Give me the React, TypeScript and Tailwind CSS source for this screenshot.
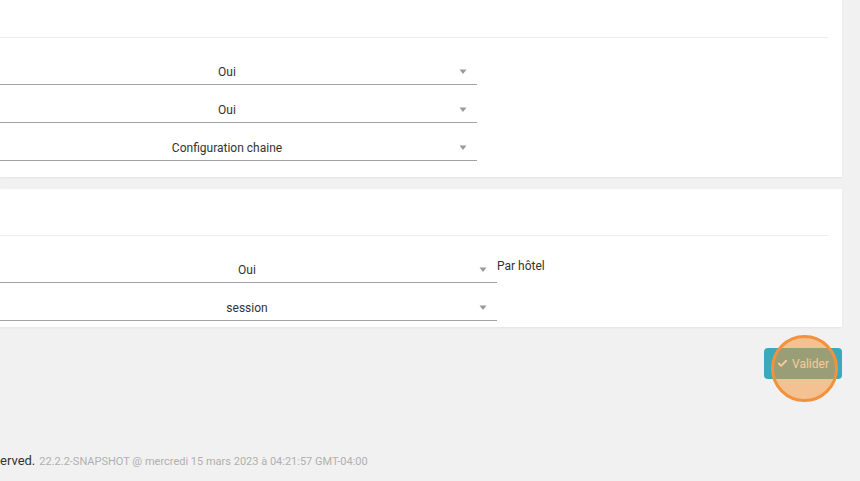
import { Check } from 'lucide-react';

function Caret() {
  return (
    <svg width="8" height="6" viewBox="0 0 8 6" className="absolute right-[10px] top-[10px]">
      <path d="M0.5 0.5 L7.5 0.5 L4 5 Z" fill="#9a9a9a" />
    </svg>
  );
}

function Select({ value, offset }: { value: string; offset: string }) {
  return (
    <div className={`flex h-[38px] w-[500px] shrink-0 items-end ${offset}`}>
      <div className="relative flex h-[26px] w-full items-center justify-center border-b border-[#a3a3a3]">
        <span className="text-[12px] text-[#333]">{value}</span>
        <Caret />
      </div>
    </div>
  );
}

export default function App() {
  return (
    <div
      className="relative h-[481px] w-[860px] overflow-hidden bg-[#f1f1f1]"
      style={{ fontFamily: 'Roboto, "Liberation Sans", sans-serif' }}
    >
      <div className="flex w-[842px] flex-col">
        {/* Card 1 */}
        <div className="flex h-[177px] flex-col overflow-hidden bg-white pr-[14px] shadow-[0_1px_2px_rgba(0,0,0,0.06)]">
          <div className="h-[38px] shrink-0 border-b border-[#ececec]" />
          <div className="flex flex-col pt-[9px]">
            <Select value="Oui" offset="ml-[-23px]" />
            <Select value="Oui" offset="ml-[-23px]" />
            <Select value="Configuration chaine" offset="ml-[-23px]" />
          </div>
        </div>

        {/* Card 2 */}
        <div className="mt-[12px] flex h-[138px] flex-col overflow-hidden bg-white pr-[14px] shadow-[0_1px_2px_rgba(0,0,0,0.06)]">
          <div className="h-[47px] shrink-0 border-b border-[#ececec]" />
          <div className="flex flex-col pt-[9px]">
            <div className="flex items-start">
              <Select value="Oui" offset="ml-[-3px]" />
              <span className="pt-[12px] text-[12px] text-[#333]">Par hôtel</span>
            </div>
            <Select value="session" offset="ml-[-3px]" />
          </div>
        </div>

        {/* Actions */}
        <div className="mt-[21px] flex justify-end">
          <button className="flex h-[31px] w-[78px] items-center justify-center gap-[4px] rounded-[4px] bg-[#3aa9b9] text-[12px] text-white">
            <Check size={11} strokeWidth={4} />
            Valider
          </button>
        </div>

        {/* Footer */}
        <div className="mt-[72px] flex items-baseline gap-[4px]">
          <span className="text-[13px] text-[#333]">erved.</span>
          <span className="text-[11px] text-[#b0b0b0]">22.2.2-SNAPSHOT @ mercredi 15 mars 2023 à 04:21:57 GMT-04:00</span>
        </div>
      </div>

      {/* click highlight */}
      <div className="pointer-events-none absolute left-[771px] top-[335px] h-[67px] w-[67px] rounded-full border-[3px] border-[#f2923c] bg-[rgba(247,148,52,0.5)]" />
    </div>
  );
}
